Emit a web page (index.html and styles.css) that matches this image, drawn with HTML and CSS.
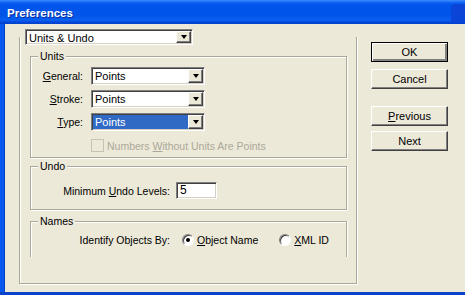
FILE: index.html
```html
<!DOCTYPE html>
<html lang="en">
<head>
    <meta charset="UTF-8">
    <title>Preferences</title>
    <link rel="stylesheet" href="styles.css">
</head>
<body>
    <div class="window">
        <div class="titlebar">
            <span class="title">Preferences</span>
            <span class="title-btn"></span>
        </div>
        <div class="content">
            <div class="panel">
                <div class="dropdown page-select">
                    <span class="dropdown-value">Units &amp; Undo</span>
                    <span class="arrow-btn"><i></i></span>
                </div>
                <div class="frame">
                    <div class="group units">
                        <span class="group-title">Units</span>
                        <div class="unit-rows">
                            <span class="row-label"><u>G</u>eneral:</span>
                            <div class="dropdown">
                                <span class="dropdown-value">Points</span>
                                <span class="arrow-btn"><i></i></span>
                            </div>
                            <span class="row-label"><u>S</u>troke:</span>
                            <div class="dropdown">
                                <span class="dropdown-value">Points</span>
                                <span class="arrow-btn"><i></i></span>
                            </div>
                            <span class="row-label"><u>T</u>ype:</span>
                            <div class="dropdown">
                                <span class="dropdown-value selected">Points</span>
                                <span class="arrow-btn"><i></i></span>
                            </div>
                        </div>
                        <div class="check-row disabled">
                            <span class="checkbox"></span>
                            <span>Numbers <u>W</u>ithout Units Are Points</span>
                        </div>
                    </div>
                    <div class="group undo">
                        <span class="group-title">Undo</span>
                        <div class="field-row">
                            <span class="field-label">Minimum <u>U</u>ndo Levels:</span>
                            <div class="textbox">5</div>
                        </div>
                    </div>
                    <div class="group names">
                        <span class="group-title">Names</span>
                        <div class="field-row">
                            <span class="field-label">Identify Objects By:</span>
                            <span class="radio checked"></span>
                            <span class="radio-text"><u>O</u>bject Name</span>
                            <span class="radio second"></span>
                            <span class="radio-text"><u>X</u>ML ID</span>
                        </div>
                    </div>
                </div>
            </div>
            <div class="buttons">
                <button class="btn default">OK</button>
                <button class="btn">Cancel</button>
                <button class="btn prev"><u>P</u>revious</button>
                <button class="btn">Next</button>
            </div>
        </div>
    </div>
</body>
</html>
```

FILE: styles.css
```css
body {
    margin: 0;
    font-family: "Liberation Sans", Arial, sans-serif;
    font-size: 10.5px;
    color: #000;
    background: #ece9d8;
    overflow: hidden;
}
.window {
    width: 465px;
    height: 295px;
    box-sizing: border-box;
    display: flex;
    flex-direction: column;
    border-bottom: 3px solid #0843c9;
    overflow: hidden;
}
.titlebar {
    height: 24px;
    flex: none;
    display: flex;
    align-items: center;
    justify-content: space-between;
    background: linear-gradient(#3d8cff 0, #0a5cf0 3px, #0055ea 6px, #0053e8 60%, #0a5eef 85%, #0547d6 92%, #0040cc 100%);
}
.title {
    padding: 2px 0 0 7px;
    color: #fff;
    font-weight: bold;
    font-size: 11.5px;
    text-shadow: 1px 1px #0a2ea0;
}
.title-btn {
    width: 22px;
    height: 19px;
    margin: 2px -8px 0 0;
    border-radius: 4px;
    background: #0b45d8;
}
.content {
    flex: 1;
    display: flex;
    padding: 5px 0 0 15px;
    border-left: 4px solid #0658ee;
    box-shadow: inset 1px 0 #0042c6;
}

/* left side */
.panel {
    width: 338px;
}
.page-select {
    width: 168px;
    height: 16px;
    margin-left: 6px;
}
.frame {
    position: relative;
    margin-top: -8px;
    padding: 19px 9px 26px 10px;
    border: 1px solid #aca899;
    border-top: none;
    box-shadow: inset 1px 0 #fff, 1px 1px #fff;
}
.group {
    border: 1px solid #aca899;
    box-shadow: inset 1px 1px #fff, 1px 1px #fff;
}
.group-title {
    display: block;
    width: fit-content;
    margin: -7px 0 0 7px;
    padding: 0 2px;
    line-height: 13px;
    background: #ece9d8;
}
.units {
    padding-bottom: 5px;
}
.undo {
    margin-top: 8px;
    padding-bottom: 10px;
}
.names {
    margin-top: 11px;
    padding-bottom: 11px;
    border-bottom: none;
    box-shadow: inset 1px 1px #fff, 1px 0 #fff;
}

/* units rows */
.unit-rows {
    display: grid;
    grid-template-columns: 52px 114px;
    grid-auto-rows: 18px;
    column-gap: 8px;
    row-gap: 5px;
    margin-top: 4px;
    align-items: center;
}
.row-label {
    text-align: right;
}
.dropdown {
    display: flex;
    box-sizing: border-box;
    background: #fff;
    border: 1px solid;
    border-color: #808080 #fff #fff #808080;
    box-shadow: inset 1px 1px #404040, inset -1px -1px #d4d0c8;
    padding: 1px;
}
.unit-rows .dropdown {
    height: 18px;
}
.dropdown-value {
    flex: 1;
    padding-left: 2px;
    line-height: 14px;
    font-size: 11px;
    white-space: nowrap;
}
.dropdown-value.selected {
    background: #316ac5;
    color: #fff;
}
.arrow-btn {
    width: 15px;
    box-sizing: border-box;
    display: flex;
    align-items: center;
    justify-content: center;
    background: #ece9d8;
    border: 1px solid;
    border-color: #fff #404040 #404040 #fff;
    box-shadow: inset -1px -1px #808080;
}
.arrow-btn i {
    width: 0;
    height: 0;
    border-left: 3px solid transparent;
    border-right: 3px solid transparent;
    border-top: 4px solid #000;
}
.check-row {
    display: flex;
    align-items: center;
    gap: 3px;
    margin: 8px 0 0 60px;
    height: 13px;
    white-space: nowrap;
}
.disabled {
    color: #aca899;
}
.checkbox {
    width: 13px;
    height: 13px;
    box-sizing: border-box;
    border: 1px solid #c7c3b3;
}

/* undo + names */
.field-row {
    display: flex;
    align-items: center;
    white-space: nowrap;
}
.field-row > * {
    flex: none;
}
.undo .field-row {
    margin-top: 9px;
}
.names .field-row {
    margin-top: 5px;
    height: 13px;
}
.field-label {
    width: 139px;
    text-align: right;
    margin-right: 6px;
}
.textbox {
    width: 41px;
    height: 17px;
    box-sizing: border-box;
    padding: 1px 3px;
    line-height: 13px;
    font-size: 12px;
    background: #fff;
    border: 1px solid;
    border-color: #808080 #fff #fff #808080;
    box-shadow: inset 1px 1px #404040, inset -1px -1px #d4d0c8;
}
.radio {
    width: 12px;
    height: 12px;
    box-sizing: border-box;
    margin-left: 6px;
    border-radius: 50%;
    background: #fff;
    border: 1px solid;
    border-color: #808080 #fff #fff #808080;
    box-shadow: inset 1px 1px #404040;
    display: flex;
    align-items: center;
    justify-content: center;
}
.radio.second {
    margin-left: 21px;
}
.radio.checked::after {
    content: "";
    width: 4px;
    height: 4px;
    border-radius: 50%;
    background: #000;
}
.radio-text {
    margin-left: 3px;
}

/* buttons */
.buttons {
    display: flex;
    flex-direction: column;
    margin: 13px 0 0 14px;
}
.btn {
    width: 77px;
    height: 20px;
    padding: 0;
    margin-bottom: 7px;
    font-family: inherit;
    font-size: 11px;
    color: #000;
    background: #ece9d8;
    border: 1px solid;
    border-color: #fff #404040 #404040 #fff;
    box-shadow: inset -1px -1px #808080;
}
.btn.default {
    border: 1px solid #000;
    box-shadow: inset 1px 1px #fff, inset -2px -2px #808080, inset -1px -1px #404040;
}
.btn.prev {
    margin-top: 10px;
    margin-bottom: 5px;
}
```
